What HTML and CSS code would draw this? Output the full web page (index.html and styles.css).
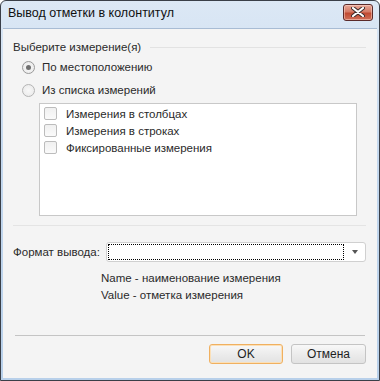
FILE: index.html
```html
<!DOCTYPE html>
<html lang="ru">
<head>
  <meta charset="UTF-8" />
  <title>Вывод отметки в колонтитул</title>
  <link rel="stylesheet" href="styles.css">
</head>
<body>

  <div class="window">
    <div class="titlebar">
      <span class="title">Вывод отметки в колонтитул</span>
      <button class="close-btn" type="button" aria-label="Закрыть">
        <svg width="14" height="10" viewBox="0 0 14 10">
          <path d="M2 1 L12 9 M12 1 L2 9" stroke="#3a2a2a" stroke-width="4" stroke-linecap="round"/>
          <path d="M2 1 L12 9 M12 1 L2 9" stroke="#ffffff" stroke-width="2.2" stroke-linecap="round"/>
        </svg>
      </button>
    </div>

    <div class="client">
      <div class="group-head">
        <span>Выберите измерение(я)</span>
        <span class="head-line"></span>
      </div>

      <label class="radio-row">
        <span class="radio checked"></span> По местоположению
      </label>
      <label class="radio-row">
        <span class="radio"></span> Из списка измерений
      </label>

      <div class="list-box">
        <label class="check-row"><span class="check"></span> Измерения в столбцах</label>
        <label class="check-row"><span class="check"></span> Измерения в строках</label>
        <label class="check-row"><span class="check"></span> Фиксированные измерения</label>
      </div>

      <div class="separator light"></div>

      <div class="format-row">
        <span class="format-label">Формат вывода:</span>
        <div class="combo">
          <div class="combo-field"></div>
          <span class="combo-arrow"></span>
        </div>
      </div>

      <div class="hint">
        <div>Name - наименование измерения</div>
        <div>Value - отметка измерения</div>
      </div>

      <div class="separator dark"></div>

      <div class="buttons">
        <button type="button" class="btn default">OK</button>
        <button type="button" class="btn">Отмена</button>
      </div>
    </div>
  </div>

</body>
</html>
```

FILE: styles.css
```css
body {
  margin: 0;
  padding: 0;
  font-family: 'Liberation Sans', Arial, sans-serif;
  font-size: 11.5px;
  color: #1e1e1e;
  background: #ffffff;
}

.window {
  width: 380px;
  height: 381px;
  box-sizing: border-box;
  border: 1px solid #3a3f48;
  border-radius: 6px 6px 0 0;
  background: linear-gradient(180deg, #dce8f5 0%, #c4d8ee 40%, #b8d0ea 100%);
  padding: 0 2px 2px 2px;
  display: flex;
  flex-direction: column;
}

.titlebar {
  height: 27px;
  display: flex;
  align-items: center;
  justify-content: space-between;
  padding-left: 5px;
  padding-right: 4px;
}

.title {
  font-size: 12.5px;
  color: #101010;
  margin-top: -3px;
}

.close-btn {
  width: 30px;
  height: 17px;
  margin-top: -5px;
  padding: 0;
  border: 1px solid #5a2a2a;
  border-radius: 3px;
  background: linear-gradient(180deg, #e8a898 0%, #d47a66 45%, #c04a32 55%, #d0705a 100%);
  display: flex;
  align-items: center;
  justify-content: center;
  box-shadow: inset 0 0 0 1px rgba(255, 220, 210, 0.5);
}

.client {
  flex: 1;
  background: #f4f4f4;
  border-top: 1px solid #a8bcd4;
  padding: 0 11px 0 10px;
  display: flex;
  flex-direction: column;
}

.group-head {
  display: flex;
  align-items: center;
  height: 14px;
  margin-top: 11px;
  color: #2a2a2a;
}

.head-line {
  flex: 1;
  height: 1px;
  background: #e2e2e2;
  margin-left: 9px;
}

.radio-row {
  display: flex;
  align-items: center;
  height: 14px;
  margin-left: 9px;
  gap: 7px;
  color: #2a2a2a;
}

.group-head + .radio-row {
  margin-top: 6px;
}

.radio-row + .radio-row {
  margin-top: 9px;
}

.radio {
  width: 11px;
  height: 11px;
  border: 1px solid #b4b4b4;
  border-radius: 50%;
  background: radial-gradient(circle, #f8f8f8 0%, #e8e8e8 100%);
  position: relative;
}

.radio.checked {
  border-color: #9a9a9a;
}

.radio.checked::after {
  content: '';
  position: absolute;
  left: 3px;
  top: 3px;
  width: 5px;
  height: 5px;
  border-radius: 50%;
  background: #707070;
}

.list-box {
  margin: 6px 0 0 26px;
  width: 318px;
  height: 113px;
  box-sizing: border-box;
  background: #ffffff;
  border: 1px solid #c8c8c8;
  padding: 3px 0 0 4px;
  display: flex;
  flex-direction: column;
  gap: 4px;
}

.check-row {
  display: flex;
  align-items: center;
  height: 13px;
  gap: 9px;
  color: #2a2a2a;
}

.check {
  width: 11px;
  height: 11px;
  border: 1px solid #bcbcbc;
  border-radius: 2px;
  background: linear-gradient(180deg, #f0f0f0 0%, #fafafa 100%);
}

.separator {
  height: 1px;
}

.separator.light {
  background: #e4e4e4;
  margin: 9px 0 0 0;
}

.separator.dark {
  background: #c4c4c4;
  margin: 33px 1px 0 2px;
}

.format-row {
  display: flex;
  align-items: center;
  margin-top: 16px;
}

.format-label {
  width: 93px;
  color: #2a2a2a;
}

.combo {
  width: 260px;
  height: 20px;
  box-sizing: border-box;
  border: 1px solid #d0d0d0;
  border-radius: 3px;
  background: #ffffff;
  display: flex;
  align-items: center;
  padding: 1px;
}

.combo-field {
  width: 236px;
  height: 100%;
  box-sizing: border-box;
  border: 1px dotted #000000;
}

.combo-arrow {
  margin-left: 8px;
  width: 0;
  height: 0;
  border-left: 3.5px solid transparent;
  border-right: 3.5px solid transparent;
  border-top: 4px solid #555555;
}

.hint {
  margin: 9px 0 0 88px;
  display: flex;
  flex-direction: column;
  gap: 3px;
  color: #2a2a2a;
}

.hint div {
  height: 14px;
  line-height: 14px;
}

.buttons {
  display: flex;
  justify-content: flex-end;
  gap: 8px;
  margin-top: 8px;
}

.btn {
  width: 75px;
  height: 20px;
  padding: 0;
  font-family: inherit;
  font-size: 12px;
  color: #1e1e1e;
  border: 1px solid #c4c4c4;
  border-radius: 3px;
  background: linear-gradient(180deg, #f8f8f8 0%, #ececec 50%, #e2e2e2 100%);
}

.btn.default {
  width: 74px;
  border-color: #f0b060;
  box-shadow: inset 0 0 0 1px #fbe0b8;
}
```
